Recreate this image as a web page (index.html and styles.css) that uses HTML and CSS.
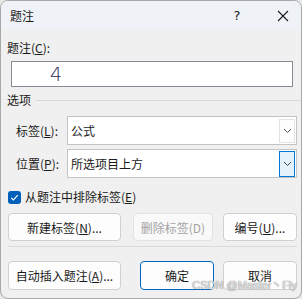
FILE: index.html
```html
<!DOCTYPE html>
<html lang="zh-CN">

<head>
    <meta charset="UTF-8">
    <link rel="stylesheet" href="styles.css">
</head>

<body>
    <div class="dialog">
        <div class="titlebar">
            <span class="title">题注</span>
            <span class="help">?</span>
            <span class="close">
                <svg width="12" height="12" viewBox="0 0 12 12">
                    <path d="M1 1 L11 11 M11 1 L1 11" stroke="#1a1a1a" stroke-width="1.1" fill="none" />
                </svg>
            </span>
        </div>

        <div class="content">
            <div class="field-label">题注(<u>C</u>):</div>
            <div class="caption-box">4</div>

            <div class="group-head">
                <span>选项</span>
                <span class="group-line"></span>
            </div>

            <div class="combo-row first">
                <span class="combo-label">标签(<u>L</u>):</span>
                <div class="combo">
                    <span class="combo-text">公式</span>
                    <span class="drop">
                        <svg width="9" height="6" viewBox="0 0 9 6">
                            <path d="M1 1 L4.5 4.5 L8 1" stroke="#555" stroke-width="1" fill="none" />
                        </svg>
                    </span>
                </div>
            </div>

            <div class="combo-row">
                <span class="combo-label">位置(<u>P</u>):</span>
                <div class="combo">
                    <span class="combo-text">所选项目上方</span>
                    <span class="drop active">
                        <svg width="9" height="6" viewBox="0 0 9 6">
                            <path d="M1 1 L4.5 4.5 L8 1" stroke="#444" stroke-width="1" fill="none" />
                        </svg>
                    </span>
                </div>
            </div>

            <div class="check-row">
                <span class="checkbox">
                    <svg width="13" height="13" viewBox="0 0 13 13">
                        <path d="M3.2 6.8 L5.4 9 L9.8 4.2" stroke="#fff" stroke-width="1.2" fill="none" />
                    </svg>
                </span>
                <span>从题注中排除标签(<u>E</u>)</span>
            </div>

            <div class="btn-row">
                <button class="btn wide">新建标签(<u>N</u>)...</button>
                <button class="btn del" disabled>删除标签(D)</button>
                <button class="btn small">编号(<u>U</u>)...</button>
            </div>

            <div class="sep"></div>

            <div class="btn-row last">
                <button class="btn wide">自动插入题注(<u>A</u>)...</button>
                <button class="btn ok">确定</button>
                <button class="btn small">取消</button>
            </div>
        </div>

        <div class="watermark">CSDN @Master丶Fly</div>
    </div>
</body>

</html>
```

FILE: styles.css
```css
body,
html {
    margin: 0;
    height: 100%;
    background: #e8e8e8;
}

.dialog {
    position: relative;
    box-sizing: border-box;
    width: 302px;
    height: 299px;
    background: #f0f0f0;
    border: 1px solid #a8a8a8;
    border-radius: 8px;
    overflow: hidden;
    font-family: "Noto Sans CJK SC", "DejaVu Sans", sans-serif;
    font-size: 12px;
    color: #1a1a1a;
}

.titlebar {
    display: flex;
    align-items: center;
    height: 29px;
    background: #eff2f7;
}

.title {
    margin-left: 9px;
    line-height: 16px;
}

.help {
    margin-left: auto;
    width: 12px;
    font-family: "DejaVu Sans", sans-serif;
    font-size: 13px;
    text-align: center;
}

.close {
    display: flex;
    margin-left: 34px;
    margin-right: 12px;
}

.content {
    display: flex;
    flex-direction: column;
    padding: 0 4px 0 6px;
}

u {
    text-decoration: underline;
    text-underline-offset: 1px;
}

.field-label {
    margin-top: 10px;
    line-height: 16px;
}

.caption-box {
    box-sizing: border-box;
    margin: 5px 0 0 4px;
    width: 282px;
    height: 26px;
    padding-left: 38px;
    background: #fff;
    border: 1px solid #868a94;
    font-family: "DejaVu Sans", sans-serif;
    font-size: 19px;
    font-weight: 300;
    line-height: 24px;
    color: #2d2d5a;
}

.group-head {
    display: flex;
    align-items: center;
    margin-top: 5px;
    line-height: 16px;
}

.group-line {
    flex: 1;
    height: 1px;
    margin-left: 5px;
    margin-right: -4px;
    background: #d9d9d9;
}

.combo-row {
    display: flex;
    align-items: center;
    margin-top: 4px;
}

.combo-row.first {
    margin-top: 8px;
}

.combo-label {
    width: 51px;
    margin-left: 9px;
}

.combo {
    display: flex;
    align-items: center;
    box-sizing: border-box;
    width: 230px;
    height: 29px;
    padding: 2px 1px 2px 3px;
    background: #fff;
    border: 1px solid #c4c4c4;
}

.combo-text {
    flex: 1;
}

.drop {
    display: flex;
    justify-content: center;
    align-items: center;
    box-sizing: border-box;
    width: 16px;
    height: 24px;
    background: #fdfdfd;
    border: 1px solid #e3e3e3;
}

.drop.active {
    height: 26px;
    background: #e5f1fb;
    border-color: #0078d4;
}

.check-row {
    display: flex;
    align-items: center;
    margin-top: 11px;
    line-height: 16px;
}

.checkbox {
    display: flex;
    width: 13px;
    height: 13px;
    margin-left: 1px;
    margin-right: 4px;
    background: #005fb8;
    border-radius: 3px;
}

.btn-row {
    display: flex;
    margin-top: 8px;
}

.btn-row.last {
    margin-top: 14px;
}

.btn {
    box-sizing: border-box;
    height: 28px;
    padding: 0;
    background: #fdfdfd;
    border: 1px solid #d0d0d0;
    border-radius: 4px;
    font-family: inherit;
    font-size: 12px;
    color: #1a1a1a;
}

.btn-row.last .btn {
    height: 29px;
}

.btn.wide {
    margin-left: 1px;
    width: 113px;
}

.btn.del {
    margin-left: 12px;
    width: 80px;
    background: #f9f9f9;
    border-color: #e2e2e2;
    color: #a3a3a3;
}

.btn.ok {
    margin-left: 19px;
    width: 74px;
    border-color: #0067c0;
}

.btn.small {
    margin-left: auto;
    width: 74px;
}

.sep {
    height: 1px;
    margin-top: 5px;
    margin-left: 1px;
    background: #dadada;
}

.watermark {
    position: absolute;
    right: 4px;
    bottom: 7px;
    font-family: "Liberation Sans", sans-serif;
    font-size: 11px;
    line-height: 11px;
    color: rgba(235, 235, 235, 0.95);
    text-shadow: 0 0 1px #8c8c8c, 0 0 1px #8c8c8c;
}
```
